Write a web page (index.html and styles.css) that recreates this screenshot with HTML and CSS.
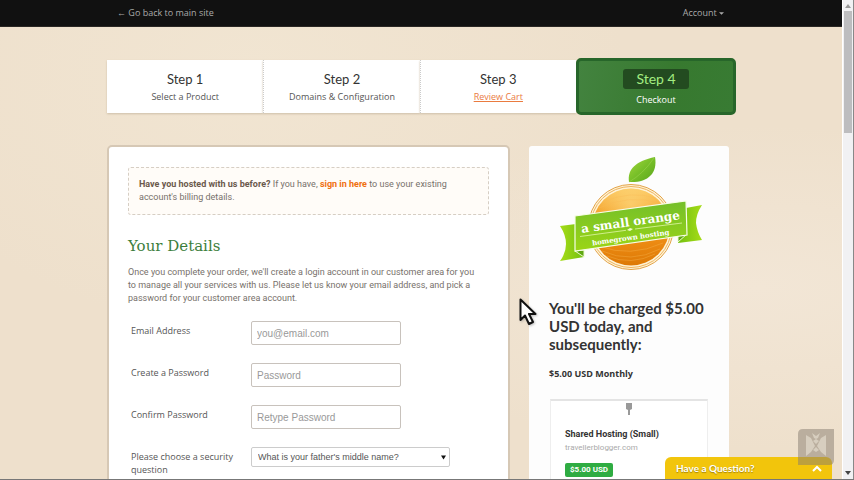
FILE: index.html
```html
<!DOCTYPE html>
<html lang="en">
<head>
<meta charset="utf-8">
<title>Checkout - A Small Orange</title>
<link rel="stylesheet" href="styles.css">
</head>
<body>
<div class="window">
  <div class="page">
    <header class="topbar">
      <div class="container topbar-inner">
        <a class="back" href="#">← Go back to main site</a>
        <button class="account" type="button">Account <svg class="caret" viewBox="0 0 6 3"><path d="M0 0h6L3 3z" fill="#aaa"/></svg></button>
      </div>
    </header>

    <ol class="container steps">
      <li class="step"><span class="step-title">Step 1</span><span class="step-name">Select a Product</span></li>
      <li class="step"><span class="step-title">Step 2</span><span class="step-name">Domains &amp; Configuration</span></li>
      <li class="step"><span class="step-title">Step 3</span><a class="step-name step-link" href="#">Review Cart</a></li>
      <li class="step current"><span class="step-title">Step 4</span><span class="step-name">Checkout</span></li>
    </ol>

    <div class="container columns">
      <main class="details">
        <p class="notice"><strong>Have you hosted with us before?</strong> If you have, <a href="#">sign in here</a> to use your existing account's billing details.</p>
        <h1>Your Details</h1>
        <p class="intro">Once you complete your order, we'll create a login account in our customer area for you to manage all your services with us. Please let us know your email address, and pick a password for your customer area account.</p>
        <form class="form">
          <div class="field"><label for="email">Email Address</label><input id="email" type="email" placeholder="you@email.com"></div>
          <div class="field"><label for="pw">Create a Password</label><input id="pw" type="password" placeholder="Password"></div>
          <div class="field"><label for="pw2">Confirm Password</label><input id="pw2" type="password" placeholder="Retype Password"></div>
          <div class="field"><label for="question">Please choose a security question</label>
            <div class="select-wrap"><select id="question"><option>What is your father's middle name?</option></select><svg class="select-arrow" viewBox="0 0 6 5"><path d="M0 0h6L3 5z" fill="#111"/></svg></div>
          </div>
        </form>
      </main>

      <aside class="summary">
        <svg class="logo" viewBox="558 154 146 118" role="img" aria-label="a small orange homegrown hosting">
          <defs>
            <linearGradient id="orange" x1="0" y1="0" x2="0" y2="1"><stop offset="0" stop-color="#fbc45a"/><stop offset=".3" stop-color="#f4a32c"/><stop offset=".7" stop-color="#ec8a12"/><stop offset="1" stop-color="#dd7906"/></linearGradient>
            <radialGradient id="shine" cx=".5" cy=".2" r=".5"><stop offset="0" stop-color="#ffe08a" stop-opacity=".6"/><stop offset="1" stop-color="#ffe08a" stop-opacity="0"/></radialGradient>
            <linearGradient id="leaf" x1="0" y1="0" x2="1" y2="1"><stop offset="0" stop-color="#a4d83f"/><stop offset=".5" stop-color="#77bf28"/><stop offset="1" stop-color="#5aa51e"/></linearGradient>
            <linearGradient id="ribbon" x1="0" y1="0" x2="0" y2="1"><stop offset="0" stop-color="#74bf2a"/><stop offset="1" stop-color="#9bd516"/></linearGradient>
            <linearGradient id="tail" x1="0" y1="0" x2="1" y2="0"><stop offset="0" stop-color="#a6dc18"/><stop offset="1" stop-color="#72c010"/></linearGradient>
            <linearGradient id="tail2" x1="1" y1="0" x2="0" y2="0"><stop offset="0" stop-color="#a6dc18"/><stop offset="1" stop-color="#72c010"/></linearGradient>
          </defs>
          <circle cx="631" cy="227" r="42.5" fill="#fff3d6" stroke="#e3a348"/>
          <circle cx="631" cy="227" r="40.5" fill="none" stroke="#edb35f"/>
          <circle cx="631" cy="227" r="38.5" fill="url(#orange)"/>
          <circle cx="631" cy="227" r="38.5" fill="url(#shine)"/>
          <g fill="none" stroke="#f8ba54" stroke-width=".6" opacity=".6"><path d="M599 246Q630 258 663 243M602 251Q631 264 660 249M607 256Q631 266 655 254M599 208Q628 194 660 203M603 202Q630 190 656 198"/></g>
          <path d="M629 182C627 169 636 161 655 157C658 174 647 183 629 182Z" fill="url(#leaf)"/>
          <path d="M629 182Q643 174 654 158" fill="none" stroke="#9bd24e" stroke-width=".6"/>
          <path d="M560 226L576 224L584 257L560 261Q566 253 566 244Q566 235 560 226Z" fill="url(#tail)"/>
          <path d="M686 208L702 205Q696 214 696 223Q697 232 702 240L678 243Z" fill="url(#tail2)"/>
          <path d="M575 251L584 257V250ZM687 234L678 242V236Z" fill="#5fa812" stroke="#eef9d0" stroke-width="1"/>
          <path d="M575 216L686 201L687 235L575 251Z" fill="url(#ribbon)" stroke="#f7fde8" stroke-width="1.2"/>
          <path d="M580 236.500L626 230.300M635 229L682 223" stroke="#e1f6a6" stroke-width=".8"/>
          <path d="M627 230l3-2 3 1-3 2z" fill="#f0fbc9"/>
          <g fill="#fff" font-family="DejaVu Serif, serif" font-weight="bold" text-anchor="middle">
            <text transform="translate(631 226) rotate(-8)" class="logo-name">a small orange</text>
            <text transform="translate(631 240) rotate(-8)" class="logo-tag">homegrown hosting</text>
          </g>
        </svg>
        <h2>You'll be charged $5.00 USD today, and subsequently:</h2>
        <p class="recurring">$5.00 USD Monthly</p>
        <section class="item">
          <svg class="pin" viewBox="0 0 8 12"><path d="M1 0h6v6l-2 1v5H3V7L1 6z" fill="#999"/></svg>
          <h3>Shared Hosting (Small)</h3>
          <p class="domain">travellerblogger.com</p>
          <span class="price">$5.00 USD</span>
        </section>
      </aside>
    </div>

    <button class="chat" type="button">Have a Question?
      <svg class="chevron" viewBox="0 0 12 8"><path d="M2 7l4-4 4 4" fill="none" stroke="#fff" stroke-width="2"/></svg>
    </button>
    <svg class="watermark" viewBox="0 0 36 36">
      <path d="M5 0H36V31Q36 36 31 36H0V5Q0 0 5 0Z" fill="#857c70" opacity=".5"/>
      <path d="M8 6L13 9L17 17L13 23L8 27ZM28 6L23 9L19 17L23 23L28 27ZM14 4L18 7L22 4L20 9L18 10L16 9ZM15 12L18 10L21 12L18 15ZM15 21L18 18L21 21L18 23Z" fill="#e0d8ca" opacity=".75"/>
    </svg>
    <svg class="cursor" viewBox="0 0 18 28"><path d="M1.500 1.500V22L6 17.500L10 26L14 24L10 16H16.500Z" fill="#fff" stroke="#111" stroke-width="2" stroke-linejoin="round"/></svg>
  </div>

  <div class="scrollbar" aria-hidden="true">
    <svg class="scroll-arrow" viewBox="0 0 6 4"><path d="M0 4h6L3 0z" fill="#999"/></svg>
    <div class="thumb"></div>
    <svg class="scroll-arrow" viewBox="0 0 6 4"><path d="M0 0h6L3 4z" fill="#444"/></svg>
  </div>
</div>
</body>
</html>
```
FILE: styles.css
```css
* { box-sizing: border-box; }
body, h1, h2, h3, p, ol { margin: 0; padding: 0; }
body {
  font-family: Roboto, "Open Sans", sans-serif;
  font-size: 9px;
  line-height: 13px;
  color: #77716b;
}
button, input, select { font: inherit; margin: 0; }
.window {
  display: flex;
  height: 100vh;
  overflow: hidden;
  border-bottom: 1px solid #777;
}
.page {
  position: relative;
  flex: 1;
  min-width: 0;
  overflow: hidden;
  background:
    radial-gradient(ellipse at 30% 15%, #f1e5d2, transparent 45%),
    radial-gradient(ellipse at 90% 60%, #f2e6d6, transparent 40%),
    #eee0cc;
}
.container {
  width: 100%;
  max-width: 630px;
  margin: 0 auto;
  padding-left: 1px;
}
.topbar {
  padding: 6px 0;
  border-bottom: 1px solid #2a2724;
  background: #111;
}
.topbar-inner {
  display: flex;
  justify-content: space-between;
  padding: 0 12px 0 11px;
}
.back, .account {
  padding: 0;
  border: 0;
  background: none;
  color: #aaa;
  font-family: "Open Sans", sans-serif;
  font-size: 9px;
  line-height: 14px;
  text-decoration: none;
}
.caret { width: 5px; height: 3px; vertical-align: middle; }

.steps {
  display: grid;
  grid-template-columns: repeat(3, 1fr) 160px;
  align-items: center;
  margin-top: 31px;
  list-style: none;
}
.step {
  display: flex;
  flex-direction: column;
  align-items: center;
  gap: 1px;
  padding: 9px 0;
  background: #fff;
  box-shadow: 0 1px 2px #cdbfa9;
  color: #555;
}
.step + .step { border-left: 1px dotted #ccc; }
.step-title {
  padding: 0 13px;
  border-radius: 3px;
  color: #333;
  font-family: Lato, sans-serif;
  font-size: 13px;
  line-height: 20px;
}
.step-name { font-family: "Open Sans", sans-serif; font-size: 9px; line-height: 14px; }
.step-link { color: #ea7b3f; }
.step + .step.current {
  gap: 4px;
  padding: 8px 0 5px;
  border: 3px solid #27662a;
  border-radius: 5px;
  background: linear-gradient(100deg, #43833f, #37792f 60%, #387b33);
  box-shadow: none;
  color: #fff;
}
.current .step-title { background: #234b20; color: #a3ee82; font-size: 14px; }

.columns {
  display: grid;
  grid-template-columns: 403px 200px;
  gap: 19px;
  margin-top: 30px;
}
.details {
  padding: 20px 19px;
  border: 2px solid #d6c8b5;
  border-radius: 5px;
  background: #fff;
}
.notice {
  padding: 10px 20px 10px 10px;
  border: 1px dashed #d6cec4;
  border-radius: 3px;
  background: #fffcf8;
}
.notice strong { color: #6b594c; }
.notice a { color: #f07010; font-weight: bold; text-decoration: none; }
h1 {
  margin: 20px 0 9px;
  color: #3c7e3c;
  font: 15px/22px "DejaVu Serif", serif;
}
.intro { padding-right: 8px; }
.form { margin-top: 16px; padding-left: 3px; }
.field {
  display: grid;
  grid-template-columns: 109px 1fr;
  column-gap: 11px;
  align-items: start;
  margin-bottom: 18px;
}
.field label { padding-top: 3px; color: #555; font-family: "Open Sans", sans-serif; }
.field input {
  width: 150px;
  height: 24px;
  padding: 0 5px;
  border: 1px solid #c8c2bc;
  border-radius: 2px;
  background: #fff;
  font: 10px "Liberation Sans", sans-serif;
}
.field input::placeholder { color: #999; opacity: 1; }
.select-wrap { position: relative; width: 199px; }
.select-wrap select {
  width: 100%;
  height: 20px;
  padding: 0 6px;
  border: 1px solid #ccc;
  border-radius: 2px;
  appearance: none;
  background: #fff;
  color: #555;
  font: 9px "Liberation Sans", sans-serif;
}
.select-arrow { position: absolute; right: 4px; top: 8px; width: 5px; height: 5px; pointer-events: none; }

.summary {
  margin-top: 1px;
  padding: 8px 20px;
  border-radius: 3px;
  background: #fdfdfd;
  color: #333;
}
.logo { display: block; width: 146px; height: 118px; margin: 0 0 0 9px; }
.logo-name { font-size: 12px; }
.logo-tag { font-size: 7px; }
h2 { margin-top: 27px; font-family: Lato, sans-serif; font-size: 15px; line-height: 18px; }
.recurring { margin: 14px 0 19px; font-family: "Open Sans", sans-serif; font-weight: bold; }
.item {
  display: flex;
  flex-direction: column;
  align-items: flex-start;
  margin: 0 1px;
  padding: 2px 14px 16px;
  border: 1px solid #eee;
  border-top: 2px solid #e4e4e4;
  background: #fff;
}
.pin { align-self: center; width: 8px; height: 12px; margin-bottom: 12px; }
h3 { font-size: 9px; line-height: 14px; }
.domain { color: #aaa; font-size: 8px; line-height: 14px; }
.price {
  margin-top: 8px;
  padding: 0 5px;
  border-radius: 2px;
  background: #2fac42;
  color: #fff;
  font-size: 8px;
  font-weight: bold;
  line-height: 14px;
}

.chat {
  position: absolute;
  right: 10px;
  bottom: 0;
  display: flex;
  justify-content: space-between;
  align-items: center;
  width: 167px;
  height: 22px;
  padding: 0 9px 0 11px;
  border: 0;
  border-radius: 6px 6px 0 0;
  background: #f2c50c;
  color: #fff;
  font: bold 10px Lato, sans-serif;
  text-shadow: 0 1px 1px #a3830a;
}
.chevron { width: 12px; height: 8px; }
.watermark { position: absolute; right: 8px; bottom: 14px; width: 36px; height: 36px; pointer-events: none; }
.cursor { position: absolute; left: 519px; top: 298px; width: 18px; height: 28px; pointer-events: none; filter: drop-shadow(1px 1px 1px #8888); }

.scrollbar {
  display: flex;
  flex-direction: column;
  align-items: center;
  width: 12px;
  padding: 4px 1px;
  border-right: 1px solid #888;
  border-left: 1px solid #fff;
  background: #f1f1f3;
}
.scroll-arrow { width: 6px; height: 4px; }
.thumb { width: 100%; height: 122px; margin: 3px 0 auto; background: #bdbdbf; }
```
